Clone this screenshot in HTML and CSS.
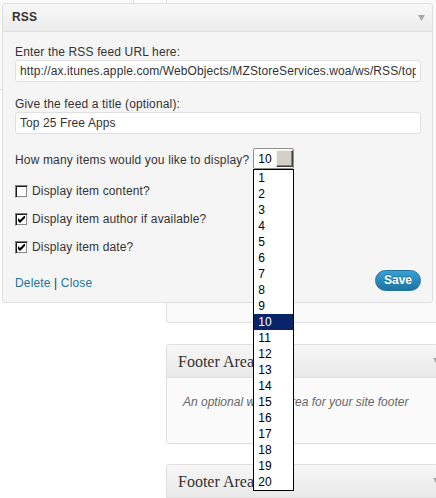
FILE: index.html
```html
<!DOCTYPE html>
<html>
<head>
<meta charset="utf-8">
<link rel="stylesheet" href="styles.css">
</head>
<body>
<div class="backdrop">
  <div class="col-left"><div class="stub"></div></div>
  <div class="col-right">
    <div class="panel-behind"></div>
    <div class="area">
      <div class="area-top">
        <span class="area-title">Footer Area One</span>
        <svg class="arrow" width="7" height="6" viewBox="0 0 7 6"><path d="M0 0H7L3.5 6Z" fill="#a8a8a8"/></svg>
      </div>
      <div class="area-body"><p class="desc">An optional widget area for your site footer</p></div>
    </div>
    <div class="area second">
      <div class="area-top">
        <span class="area-title">Footer Area Two</span>
        <svg class="arrow" width="7" height="6" viewBox="0 0 7 6"><path d="M0 0H7L3.5 6Z" fill="#a8a8a8"/></svg>
      </div>
      <div class="area-body"><p class="desc">An optional widget area for your site footer</p></div>
    </div>
  </div>
</div>

<div class="widget">
  <div class="wtop">
    <span class="wtitle">RSS</span>
    <svg class="arrow" width="7" height="6" viewBox="0 0 7 6"><path d="M0 0H7L3.5 6Z" fill="#a8a8a8"/></svg>
  </div>
  <div class="winside">
    <label class="lbl">Enter the RSS feed URL here:</label>
    <input class="field" type="text" value="http://ax.itunes.apple.com/WebObjects/MZStoreServices.woa/ws/RSS/topfreeapplications/limit=25/xml">
    <label class="lbl">Give the feed a title (optional):</label>
    <input class="field" type="text" value="Top 25 Free Apps">
    <div class="count-row">
      <span class="txt">How many items would you like to display?</span>
      <div class="combo">
        <span class="combo-val">10</span>
        <span class="combo-btn"></span>
        <ul class="combo-list">
          <li>1</li><li>2</li><li>3</li><li>4</li><li>5</li><li>6</li><li>7</li><li>8</li><li>9</li><li class="sel">10</li>
          <li>11</li><li>12</li><li>13</li><li>14</li><li>15</li><li>16</li><li>17</li><li>18</li><li>19</li><li>20</li>
        </ul>
      </div>
    </div>
    <div class="check-row">
      <span class="cb"></span><span>Display item content?</span>
    </div>
    <div class="check-row">
      <span class="cb"><svg width="7" height="7" viewBox="0 0 7 7"><path d="M0 2L2 4L7 -1V2L2 7L0 5Z" fill="#000"/></svg></span><span>Display item author if available?</span>
    </div>
    <div class="check-row last">
      <span class="cb"><svg width="7" height="7" viewBox="0 0 7 7"><path d="M0 2L2 4L7 -1V2L2 7L0 5Z" fill="#000"/></svg></span><span>Display item date?</span>
    </div>
    <div class="actions">
      <div class="links"><a class="lnk" href="#">Delete</a> | <a class="lnk" href="#">Close</a></div>
      <button class="save" type="button">Save</button>
    </div>
  </div>
</div>
</body>
</html>
```

FILE: styles.css
```css
html, body {
  margin: 0;
  padding: 0;
  height: 498px;
  overflow: hidden;
}
body {
  position: relative;
  background: #fff;
  font-family: "Liberation Sans", Arial, sans-serif;
  font-size: 12px;
  letter-spacing: 0.15px;
  color: #333;
}

/* background sidebar panels */
.backdrop {
  display: flex;
  align-items: flex-start;
}
.col-left {
  width: 134px;
  flex: none;
}
.stub {
  height: 90px;
  box-sizing: border-box;
  border-right: 1px solid #dfdfdf;
  border-bottom: 1px solid #dfdfdf;
  border-radius: 0 0 3px 0;
  background: #fafafa;
}
.col-right {
  width: 282px;
  flex: none;
  margin-left: 32px;
}
.panel-behind {
  height: 323px;
  box-sizing: border-box;
  border: 1px solid #dfdfdf;
  border-top: none;
  border-radius: 0 0 3px 3px;
  background: #fafafa;
}
.area {
  margin-top: 21px;
  border: 1px solid #dfdfdf;
  border-radius: 3px;
  background: #fbfbfb;
}
.area.second {
  margin-top: 20px;
}
.area-top {
  height: 32px;
  display: flex;
  align-items: center;
  justify-content: space-between;
  padding: 0 7px 0 11px;
  background: linear-gradient(#f7f7f7, #e9e9e9);
  border-bottom: 1px solid #dfdfdf;
  border-radius: 3px 3px 0 0;
}
.area-title {
  font-family: "Liberation Serif", "Times New Roman", serif;
  font-size: 16px;
  letter-spacing: 0;
  line-height: 30px;
  padding-top: 2px;
  color: #333;
  white-space: nowrap;
}
.area-body {
  height: 65px;
  box-sizing: border-box;
  padding: 16px 16px 0;
}
.desc {
  margin: 0;
  font-style: italic;
  letter-spacing: 0;
  line-height: 16px;
  color: #666;
}

/* RSS widget (lifted over the sidebar) */
.widget {
  position: absolute;
  left: 2px;
  top: 3px;
  width: 431px;
  box-sizing: border-box;
  border: 1px solid #dfdfdf;
  border-radius: 3px;
  background: #f5f5f5;
  z-index: 2;
}
.wtop {
  height: 27px;
  display: flex;
  align-items: center;
  justify-content: space-between;
  padding: 0 7px 0 9px;
  background: linear-gradient(#f8f8f8, #ececec);
  border-bottom: 1px solid #dfdfdf;
  border-radius: 3px 3px 0 0;
}
.wtitle {
  font-weight: bold;
  font-size: 12px;
  line-height: 27px;
  color: #333;
}
.arrow {
  display: block;
  flex: none;
}
.winside {
  padding: 12px 11px 11px 12px;
}
.lbl {
  display: block;
  line-height: 16px;
}
.field {
  display: block;
  width: 100%;
  height: 22px;
  box-sizing: border-box;
  margin: 0 0 14px;
  padding: 0 4px;
  border: 1px solid #dfdfdf;
  border-radius: 3px;
  background: #fff;
  font-family: "Liberation Sans", Arial, sans-serif;
  font-size: 12px;
  letter-spacing: 0.1px;
  color: #333;
  outline: none;
}
.count-row {
  display: flex;
  align-items: flex-end;
  gap: 4px;
  height: 21px;
  margin-bottom: 14px;
}
.count-row .txt {
  line-height: 16px;
  margin-bottom: 1px;
  white-space: nowrap;
}
.combo {
  position: relative;
  width: 41px;
  height: 21px;
  box-sizing: border-box;
  flex: none;
  border: 1px solid #8e8f8f;
  border-radius: 2px;
  background: #fff;
  padding: 2px 0 0 4px;
  line-height: 16px;
  color: #000;
}
.combo-btn {
  position: absolute;
  top: 1px;
  right: 0;
  width: 17px;
  height: 17px;
  box-sizing: border-box;
  background: #d4d0c8;
  border: 1px solid;
  border-color: #f4f3ee #404040 #404040 #f4f3ee;
  box-shadow: inset -1px -1px #808080;
}
.combo-list {
  position: absolute;
  left: -1px;
  top: calc(100% + 1px);
  width: 41px;
  box-sizing: border-box;
  margin: 0;
  padding: 0;
  list-style: none;
  border: 1px solid #000;
  background: #fff;
  z-index: 3;
}
.combo-list li {
  height: 16px;
  line-height: 16px;
  padding-left: 4px;
  color: #000;
}
.combo-list li.sel {
  background: #0a246a;
  color: #fff;
}
.check-row {
  display: flex;
  align-items: center;
  gap: 4px;
  height: 16px;
  line-height: 16px;
  margin-bottom: 12px;
}
.check-row.last {
  margin-bottom: 15px;
}
.cb {
  width: 13px;
  height: 13px;
  box-sizing: border-box;
  flex: none;
  display: flex;
  align-items: center;
  justify-content: center;
  background: #fff;
  border: 1px solid;
  border-color: #808080 #f0f0f0 #f0f0f0 #808080;
  box-shadow: inset 1px 1px #1c1c1c, inset -1px -1px #8a8a8a;
}
.cb svg {
  display: block;
}
.actions {
  display: flex;
  justify-content: space-between;
  align-items: flex-end;
}
.links {
  line-height: 16px;
  color: #333;
}
.lnk {
  color: #21759b;
  text-decoration: none;
}
.save {
  height: 21px;
  box-sizing: border-box;
  padding: 0 8px;
  border: 1px solid #22739c;
  border-radius: 11px;
  background: linear-gradient(#36a2d6, #1f72a0);
  color: #fff;
  font-family: "Liberation Sans", Arial, sans-serif;
  font-size: 12px;
  font-weight: bold;
  letter-spacing: 0;
  line-height: 19px;
  text-shadow: 0 -1px 0 rgba(0, 0, 0, 0.3);
  cursor: pointer;
}
```
